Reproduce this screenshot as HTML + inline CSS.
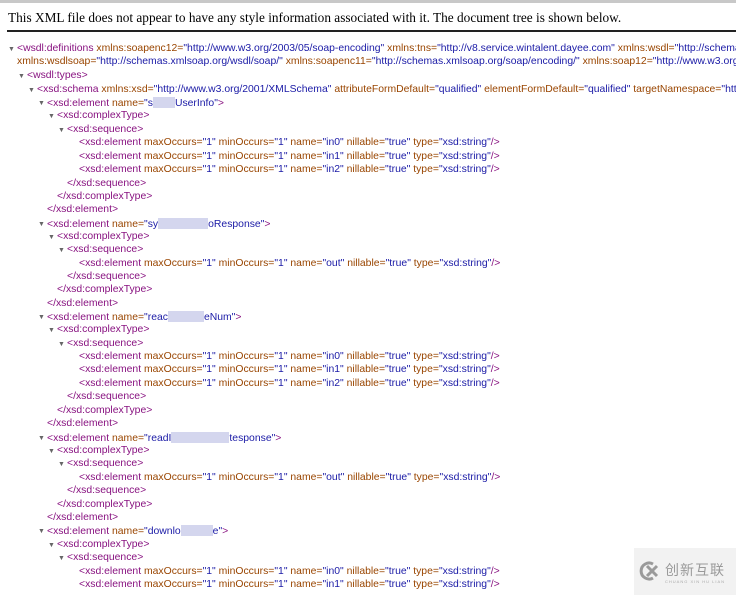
<!DOCTYPE html>
<html><head><meta charset="utf-8"><style>
body{margin:0;width:736px;height:595px;background:#fff;overflow:hidden;position:relative;font-family:"Liberation Sans",sans-serif;}
.top{position:absolute;left:0;top:0;width:736px;height:3px;background:#c8c8c8}
.hdr{position:absolute;left:8px;top:10px;font-family:"Liberation Serif",serif;font-size:13.3px;color:#000;white-space:nowrap}
.rule{position:absolute;left:7px;top:30px;width:729px;height:2px;background:#222}
.l{position:absolute;font-size:10.4px;white-space:nowrap;line-height:12px;color:#881280}
.a{color:#994500}.v{color:#1a1aa6}
.ar{position:absolute;font-size:7px;color:#666;margin-left:-9px;margin-top:1px}
.b{display:inline-block;background:#d4d6ee;height:11px;vertical-align:-2px}
.wm{position:absolute;left:634px;top:548px;width:102px;height:47px;background:#f2f2f2}
</style></head><body>
<div class="top"></div>
<div class="hdr">This XML file does not appear to have any style information associated with it. The document tree is shown below.</div>
<div class="rule"></div>

<div class="l" style="left:17px;top:43px"><span class="ar">▼</span>&lt;wsdl:definitions <span class="a">xmlns:soapenc12=</span><span class="v">"http://www.w3.org/2003/05/soap-encoding"</span> <span class="a">xmlns:tns=</span><span class="v">"http://v8.service.wintalent.dayee.com"</span> <span class="a">xmlns:wsdl=</span><span class="v">"http://schemas.xmlsoap.org/wsdl/"</span></div>
<div class="l" style="left:17px;top:56px"><span class="a">xmlns:wsdlsoap=</span><span class="v">"http://schemas.xmlsoap.org/wsdl/soap/"</span> <span class="a">xmlns:soapenc11=</span><span class="v">"http://schemas.xmlsoap.org/soap/encoding/"</span> <span class="a">xmlns:soap12=</span><span class="v">"http://www.w3.org/2003/05/soap-envelope"</span></div>
<div class="l" style="left:27px;top:70px"><span class="ar">▼</span>&lt;wsdl:types&gt;</div>
<div class="l" style="left:37px;top:84px"><span class="ar">▼</span>&lt;xsd:schema <span class="a">xmlns:xsd=</span><span class="v">"http://www.w3.org/2001/XMLSchema"</span> <span class="a">attributeFormDefault=</span><span class="v">"qualified"</span> <span class="a">elementFormDefault=</span><span class="v">"qualified"</span> <span class="a">targetNamespace=</span><span class="v">"http://v8.service"</span></div>

<div class="l" style="left:47px;top:97px"><span class="ar">▼</span>&lt;xsd:element <span class="a">name=</span><span class="v">"s<span class="b" style="width:22px"></span>UserInfo"</span>&gt;</div>
<div class="l" style="left:57px;top:110px"><span class="ar">▼</span>&lt;xsd:complexType&gt;</div>
<div class="l" style="left:67px;top:124px"><span class="ar">▼</span>&lt;xsd:sequence&gt;</div>
<div class="l" style="left:79px;top:137px">&lt;xsd:element <span class="a">maxOccurs=</span><span class="v">"1"</span> <span class="a">minOccurs=</span><span class="v">"1"</span> <span class="a">name=</span><span class="v">"in0"</span> <span class="a">nillable=</span><span class="v">"true"</span> <span class="a">type=</span><span class="v">"xsd:string"</span>/&gt;</div>
<div class="l" style="left:79px;top:151px">&lt;xsd:element <span class="a">maxOccurs=</span><span class="v">"1"</span> <span class="a">minOccurs=</span><span class="v">"1"</span> <span class="a">name=</span><span class="v">"in1"</span> <span class="a">nillable=</span><span class="v">"true"</span> <span class="a">type=</span><span class="v">"xsd:string"</span>/&gt;</div>
<div class="l" style="left:79px;top:164px">&lt;xsd:element <span class="a">maxOccurs=</span><span class="v">"1"</span> <span class="a">minOccurs=</span><span class="v">"1"</span> <span class="a">name=</span><span class="v">"in2"</span> <span class="a">nillable=</span><span class="v">"true"</span> <span class="a">type=</span><span class="v">"xsd:string"</span>/&gt;</div>
<div class="l" style="left:67px;top:178px">&lt;/xsd:sequence&gt;</div>
<div class="l" style="left:57px;top:191px">&lt;/xsd:complexType&gt;</div>
<div class="l" style="left:47px;top:204px">&lt;/xsd:element&gt;</div>

<div class="l" style="left:47px;top:218px"><span class="ar">▼</span>&lt;xsd:element <span class="a">name=</span><span class="v">"sy<span class="b" style="width:50px"></span>oResponse"</span>&gt;</div>
<div class="l" style="left:57px;top:231px"><span class="ar">▼</span>&lt;xsd:complexType&gt;</div>
<div class="l" style="left:67px;top:244px"><span class="ar">▼</span>&lt;xsd:sequence&gt;</div>
<div class="l" style="left:79px;top:258px">&lt;xsd:element <span class="a">maxOccurs=</span><span class="v">"1"</span> <span class="a">minOccurs=</span><span class="v">"1"</span> <span class="a">name=</span><span class="v">"out"</span> <span class="a">nillable=</span><span class="v">"true"</span> <span class="a">type=</span><span class="v">"xsd:string"</span>/&gt;</div>
<div class="l" style="left:67px;top:271px">&lt;/xsd:sequence&gt;</div>
<div class="l" style="left:57px;top:284px">&lt;/xsd:complexType&gt;</div>
<div class="l" style="left:47px;top:298px">&lt;/xsd:element&gt;</div>

<div class="l" style="left:47px;top:311px"><span class="ar">▼</span>&lt;xsd:element <span class="a">name=</span><span class="v">"reac<span class="b" style="width:36px"></span>eNum"</span>&gt;</div>
<div class="l" style="left:57px;top:324px"><span class="ar">▼</span>&lt;xsd:complexType&gt;</div>
<div class="l" style="left:67px;top:338px"><span class="ar">▼</span>&lt;xsd:sequence&gt;</div>
<div class="l" style="left:79px;top:351px">&lt;xsd:element <span class="a">maxOccurs=</span><span class="v">"1"</span> <span class="a">minOccurs=</span><span class="v">"1"</span> <span class="a">name=</span><span class="v">"in0"</span> <span class="a">nillable=</span><span class="v">"true"</span> <span class="a">type=</span><span class="v">"xsd:string"</span>/&gt;</div>
<div class="l" style="left:79px;top:364px">&lt;xsd:element <span class="a">maxOccurs=</span><span class="v">"1"</span> <span class="a">minOccurs=</span><span class="v">"1"</span> <span class="a">name=</span><span class="v">"in1"</span> <span class="a">nillable=</span><span class="v">"true"</span> <span class="a">type=</span><span class="v">"xsd:string"</span>/&gt;</div>
<div class="l" style="left:79px;top:378px">&lt;xsd:element <span class="a">maxOccurs=</span><span class="v">"1"</span> <span class="a">minOccurs=</span><span class="v">"1"</span> <span class="a">name=</span><span class="v">"in2"</span> <span class="a">nillable=</span><span class="v">"true"</span> <span class="a">type=</span><span class="v">"xsd:string"</span>/&gt;</div>
<div class="l" style="left:67px;top:391px">&lt;/xsd:sequence&gt;</div>
<div class="l" style="left:57px;top:405px">&lt;/xsd:complexType&gt;</div>
<div class="l" style="left:47px;top:418px">&lt;/xsd:element&gt;</div>

<div class="l" style="left:47px;top:432px"><span class="ar">▼</span>&lt;xsd:element <span class="a">name=</span><span class="v">"readI<span class="b" style="width:58px"></span>tesponse"</span>&gt;</div>
<div class="l" style="left:57px;top:445px"><span class="ar">▼</span>&lt;xsd:complexType&gt;</div>
<div class="l" style="left:67px;top:458px"><span class="ar">▼</span>&lt;xsd:sequence&gt;</div>
<div class="l" style="left:79px;top:472px">&lt;xsd:element <span class="a">maxOccurs=</span><span class="v">"1"</span> <span class="a">minOccurs=</span><span class="v">"1"</span> <span class="a">name=</span><span class="v">"out"</span> <span class="a">nillable=</span><span class="v">"true"</span> <span class="a">type=</span><span class="v">"xsd:string"</span>/&gt;</div>
<div class="l" style="left:67px;top:485px">&lt;/xsd:sequence&gt;</div>
<div class="l" style="left:57px;top:499px">&lt;/xsd:complexType&gt;</div>
<div class="l" style="left:47px;top:512px">&lt;/xsd:element&gt;</div>

<div class="l" style="left:47px;top:525px"><span class="ar">▼</span>&lt;xsd:element <span class="a">name=</span><span class="v">"downlo<span class="b" style="width:32px"></span>e"</span>&gt;</div>
<div class="l" style="left:57px;top:539px"><span class="ar">▼</span>&lt;xsd:complexType&gt;</div>
<div class="l" style="left:67px;top:552px"><span class="ar">▼</span>&lt;xsd:sequence&gt;</div>
<div class="l" style="left:79px;top:566px">&lt;xsd:element <span class="a">maxOccurs=</span><span class="v">"1"</span> <span class="a">minOccurs=</span><span class="v">"1"</span> <span class="a">name=</span><span class="v">"in0"</span> <span class="a">nillable=</span><span class="v">"true"</span> <span class="a">type=</span><span class="v">"xsd:string"</span>/&gt;</div>
<div class="l" style="left:79px;top:579px">&lt;xsd:element <span class="a">maxOccurs=</span><span class="v">"1"</span> <span class="a">minOccurs=</span><span class="v">"1"</span> <span class="a">name=</span><span class="v">"in1"</span> <span class="a">nillable=</span><span class="v">"true"</span> <span class="a">type=</span><span class="v">"xsd:string"</span>/&gt;</div>

<div class="wm">
<svg style="position:absolute;left:4px;top:13px" width="24" height="20" viewBox="0 0 24 20"><path d="M15 3 A8 8 0 1 0 15 17" fill="none" stroke="#9a9a9a" stroke-width="3"/><path d="M9 5 L19 15 M19 5 L9 15" stroke="#9a9a9a" stroke-width="3"/></svg>
<div style="position:absolute;left:31px;top:12px;font-family:'Noto Sans CJK SC',sans-serif;font-size:14px;color:#9a9a9a;letter-spacing:1px">创新互联</div>
<div style="position:absolute;left:31px;top:31px;font-size:4px;color:#aaa;letter-spacing:1px">CHUANG XIN HU LIAN</div>
</div>
</body></html>
